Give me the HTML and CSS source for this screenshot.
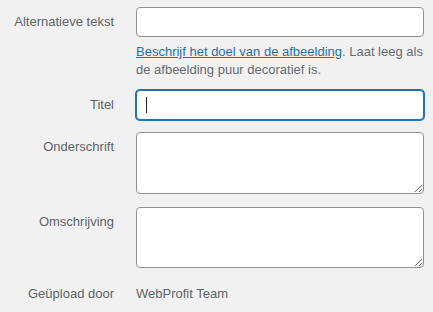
FILE: index.html
```html
<!DOCTYPE html>
<html>
<head>
    <title>Bijlage details</title>
    <link rel="stylesheet" href="styles.css">
</head>
<body>
    <div class="settings">
        <div class="setting">
            <label class="name" for="alt">Alternatieve tekst</label>
            <div class="field">
                <input type="text" id="alt" class="text-input">
                <p class="description"><a href="#">Beschrijf het doel van de afbeelding</a>. Laat leeg als de afbeelding puur decoratief is.</p>
            </div>
        </div>
        <div class="setting row-title">
            <label class="name" for="title">Titel</label>
            <div class="field caret-wrap">
                <input type="text" id="title" class="text-input is-focus">
                <span class="caret"></span>
            </div>
        </div>
        <div class="setting row-caption">
            <label class="name" for="caption">Onderschrift</label>
            <div class="field">
                <textarea id="caption" class="text-area"></textarea>
            </div>
        </div>
        <div class="setting row-desc">
            <label class="name" for="desc">Omschrijving</label>
            <div class="field">
                <textarea id="desc" class="text-area short"></textarea>
            </div>
        </div>
        <div class="setting row-author">
            <span class="name">Geüpload door</span>
            <div class="field value">WebProfit Team</div>
        </div>
    </div>
</body>
</html>
```

FILE: styles.css
```css
body {
    margin: 0;
    background: #f1f1f1;
    font-family: "Liberation Sans", Arial, sans-serif;
    font-size: 13px;
    color: #5f6469;
}

.settings {
    padding: 7px 9px 0 0;
}

.setting {
    display: flex;
    gap: 22px;
}

.name {
    width: 114px;
    flex: none;
    text-align: right;
    line-height: 16px;
    padding-top: 7px;
}

.field {
    flex: 1;
    min-width: 0;
}

.text-input,
.text-area {
    display: block;
    box-sizing: border-box;
    width: 100%;
    margin: 0;
    border: 1px solid #8c8f94;
    border-radius: 4px;
    background: #fff;
    font: inherit;
    color: #2c3338;
    outline: none;
}

.text-input {
    height: 30px;
    padding: 0 8px;
}

.text-input.is-focus {
    border-color: #2271b1;
    box-shadow: 0 0 0 1px #2271b1;
}

.text-area {
    height: 62px;
    padding: 6px 8px;
}

.text-area.short {
    height: 61px;
}

.description {
    margin: 6px 0 0;
    line-height: 18px;
    color: #676c71;
}

.description a {
    color: #2271b1;
}

.row-title {
    margin-top: 11px;
}

.caret-wrap {
    position: relative;
}

.caret {
    position: absolute;
    left: 10px;
    top: 7px;
    width: 1px;
    height: 16px;
    background: #1d2327;
}

.row-caption {
    margin-top: 12px;
}

.row-desc {
    margin-top: 13px;
}

.row-author {
    margin-top: 11px;
}

.value {
    line-height: 16px;
    padding-top: 7px;
}
```
